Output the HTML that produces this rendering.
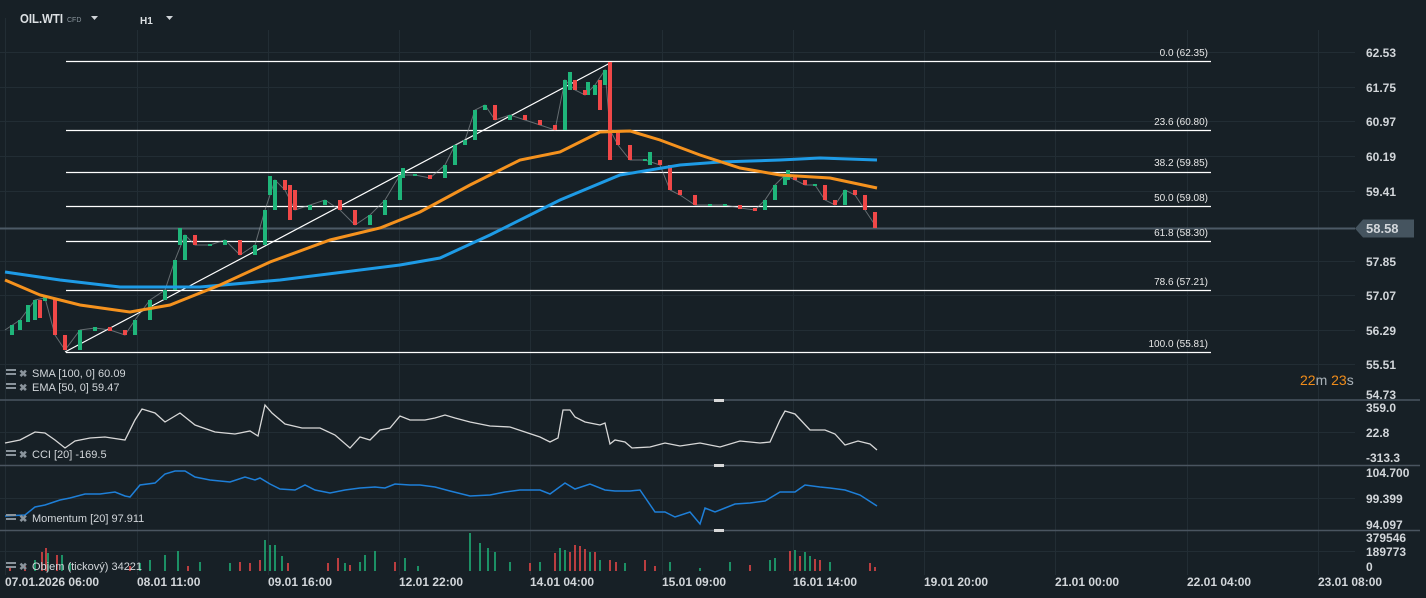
<!DOCTYPE html>
<html><head><meta charset="utf-8"><style>
html,body{margin:0;padding:0;background:#172026;overflow:hidden}
svg{display:block;font-family:"Liberation Sans",sans-serif}
.ax{fill:#d2d6da;font-size:12px;font-weight:bold}
.fib{fill:#e6e6e6;font-size:10px}
.lb{fill:#d2d6da;font-size:11px}
</style></head><body>
<svg width="1426" height="598" viewBox="0 0 1426 598">
<rect width="1426" height="598" fill="#172026"/>
<g stroke="#222d34" stroke-width="1">
<path d="M5.5 18V575M137.5 30V575M268.5 30V575M399.5 30V575M530.5 30V575M662.5 30V575M793.5 30V575M924.5 30V575M1055.5 30V575M1187.5 30V575M1318.5 30V575"/>
<path d="M0 52.5H1355M0 87.5H1355M0 121.5H1355M0 156.5H1355M0 191.5H1355M0 261.5H1355M0 295.5H1355M0 330.5H1355M0 364.5H1355M0 432.5H1355M0 498.5H1355M0 551.5H1355"/>
</g>
<g stroke="#4a5560" stroke-width="1.5"><path d="M0 400H1420M0 465.5H1420M0 530.5H1420"/></g>
<g fill="#d8d8d8"><rect x="714" y="399" width="10" height="3"/><rect x="714" y="464" width="10" height="3"/><rect x="714" y="529" width="10" height="3"/></g>
<text x="20" y="23" fill="#dde1e4" font-size="13" font-weight="bold" textLength="43" lengthAdjust="spacingAndGlyphs">OIL.WTI</text>
<text x="67" y="22" fill="#8a949c" font-size="7">CFD</text>
<path d="M91 16h7l-3.5 4z" fill="#d0d4d8"/>
<text x="140" y="24" fill="#dde1e4" font-size="10" font-weight="bold">H1</text>
<path d="M166 16h7l-3.5 4z" fill="#d0d4d8"/>
<path d="M0 228.5H1355" stroke="#4c5a66" stroke-width="2"/>
<path d="M1355 228.5l8-9h51v18h-51z" fill="#45545f"/>
<text x="1366" y="233" class="ax" style="font-size:13px">58.58</text>
<g stroke="#ffffff" stroke-width="1.2"><path d="M66 61.5H1211M66 130.5H1211M66 172.5H1211M66 206.5H1211M66 241.5H1211M66 290.5H1211M66 352.5H1211"/><path d="M65 352L612 62"/></g>
<g class="fib" text-anchor="end"><text x="1208" y="56">0.0 (62.35)</text><text x="1208" y="125">23.6 (60.80)</text><text x="1208" y="166">38.2 (59.85)</text><text x="1208" y="201">50.0 (59.08)</text><text x="1208" y="236">61.8 (58.30)</text><text x="1208" y="285">78.6 (57.21)</text><text x="1208" y="347">100.0 (55.81)</text></g>
<polyline fill="none" stroke="#9aa0a4" stroke-width="1" opacity="0.6" points="5,330 20,320 35,300 45,298 55,335 65,350 80,330 95,328 110,330 125,335 135,320 150,300 165,290 175,260 185,235 195,245 210,245 225,240 240,255 255,245 265,210 275,180 285,190 295,210 310,205 325,200 340,210 355,225 370,215 385,200 400,175 415,175 430,178 445,165 455,145 465,140 475,110 485,105 495,120 510,115 525,120 540,125 555,130 565,80 575,90 585,95 595,85 605,70 610,130 618,145 630,160 645,160 660,165 670,190 680,195 695,205 710,205 725,205 740,208 755,210 765,200 775,185 785,175 795,180 805,185 815,185 825,200 835,205 845,190 855,195 865,210 875,225"/>
<path stroke="#1fb57a" stroke-width="4" d="M20 330V320M35 320V300M45 301V297M80 350V330M95 331V327M135 335V320M150 320V300M165 300V290M175 290V260M185 260V235M225 245V240M255 255V245M265 245V210M275 210V180M310 210V205M325 205V200M370 225V215M385 215V200M400 200V175M445 178V165M455 165V145M465 145V140M475 140V110M485 110V105M510 120V115M565 130V80M595 95V85M605 85V70M765 210V200M775 200V185M785 185V175M845 205V190M210 246V244M415 176V174M645 161V159M710 206V204M725 206V204M815 186V184M12 335V325M28 322V305M180 245V228M270 195V176M403 178V168M570 90V72M588 95V82M650 165V152M788 180V170"/>
<path stroke="#f04848" stroke-width="4" d="M55 298V335M65 335V350M110 327V331M125 330V335M195 235V245M240 240V255M285 180V190M295 190V210M340 200V210M355 210V225M430 175V179M495 105V120M525 115V120M540 120V125M555 125V130M575 80V90M585 90V95M610 62V160M618 130V145M630 145V160M660 160V165M670 165V190M680 190V195M695 195V205M740 205V209M755 208V211M795 175V180M805 180V185M825 185V200M835 200V205M855 190V195M865 195V210M875 212V228M40 300V318M290 185V220M600 80V110"/>
<polyline fill="none" stroke="#1e9be6" stroke-width="3" points="5,272 60,280 120,287 200,287 280,280 400,265 440,258 490,235 560,200 620,175 680,165 720,162 780,160 820,158 877,160"/>
<polyline fill="none" stroke="#f5921e" stroke-width="3" points="5,280 40,295 80,305 130,312 170,305 220,285 270,262 330,240 380,228 420,212 470,185 520,160 560,152 600,132 630,131 660,140 700,155 740,168 780,175 830,178 877,188"/>
<g class="ax"><text x="1366" y="57">62.53</text><text x="1366" y="92">61.75</text><text x="1366" y="126">60.97</text><text x="1366" y="161">60.19</text><text x="1366" y="196">59.41</text><text x="1366" y="266">57.85</text><text x="1366" y="300">57.07</text><text x="1366" y="335">56.29</text><text x="1366" y="369">55.51</text><text x="1366" y="399">54.73</text>
<text x="1366" y="412">359.0</text><text x="1366" y="437">22.8</text><text x="1366" y="462">-313.3</text>
<text x="1366" y="477">104.700</text><text x="1366" y="503">99.399</text><text x="1366" y="529">94.097</text>
<text x="1366" y="542">379546</text><text x="1366" y="556">189773</text><text x="1366" y="571">0</text></g>
<text x="1300" y="385" font-size="14" fill="#f08c1a">22<tspan fill="#aab2b8">m</tspan> 23<tspan fill="#aab2b8">s</tspan></text>
<g class="ax" font-size="12"><text x="5" y="586">07.01.2026  06:00</text><text x="137" y="586">08.01  11:00</text><text x="268" y="586">09.01  16:00</text><text x="399" y="586">12.01  22:00</text><text x="530" y="586">14.01  04:00</text><text x="662" y="586">15.01  09:00</text><text x="793" y="586">16.01  14:00</text><text x="924" y="586">19.01  20:00</text><text x="1055" y="586">21.01  00:00</text><text x="1187" y="586">22.01  04:00</text><text x="1318" y="586">23.01  08:00</text></g>
<polyline fill="none" stroke="#d8d8d8" stroke-width="1.3" points="5,443 20,440 35,432 45,433 55,440 65,448 75,441 90,438 105,437 125,440 135,420 142,409 155,413 165,422 180,413 195,425 215,432 235,434 250,431 258,436 265,405 272,413 285,424 302,428 320,428 335,435 350,448 360,437 370,440 380,430 390,428 400,416 410,420 425,420 435,418 445,415 455,418 470,422 490,426 510,427 525,432 540,437 550,442 558,438 563,410 570,410 575,417 585,422 595,424 600,425 605,423 610,444 615,440 625,442 632,448 650,447 665,443 680,446 700,443 720,447 740,441 760,443 770,442 780,420 785,411 795,414 810,430 825,430 835,434 845,445 858,441 870,444 877,450"/>
<polyline fill="none" stroke="#1e7fd8" stroke-width="1.5" points="5,516 25,515 35,507 45,505 60,500 70,498 85,494 100,494 115,492 125,496 130,497 140,485 155,483 165,474 175,471 185,471 195,477 210,480 230,482 245,477 255,480 260,478 270,484 280,489 295,490 305,485 315,490 330,493 345,490 360,488 375,487 385,488 395,484 410,485 420,485 435,487 450,491 470,496 490,495 505,492 520,490 540,490 550,494 565,483 575,489 590,484 605,490 615,491 630,491 640,490 655,512 665,512 675,517 690,512 700,524 705,508 715,512 725,508 735,504 750,503 765,501 780,492 795,492 805,485 820,487 830,488 845,490 860,495 877,506"/>
<path stroke="#1fb57a" stroke-width="1.5" d="M35 571V560M48 571V553M62 571V555M70 571V563M140 571V563M150 571V560M165 571V555M178 571V551M200 571V562M230 571V563M265 571V540M270 571V545M275 571V545M282 571V556M345 571V563M360 571V562M365 571V555M375 571V551M405 571V558M418 571V566M470 571V533M480 571V543M488 571V548M495 571V552M510 571V562M540 571V562M560 571V548M565 571V550M590 571V552M600 571V560M625 571V563M670 571V562M700 571V568M730 571V562M770 571V560M775 571V558M795 571V550M805 571V552M810 571V556M830 571V562"/>
<path stroke="#f04848" stroke-width="1.5" d="M10 571V566M25 571V566M42 571V552M46 571V548M57 571V555M130 571V566M188 571V566M240 571V562M250 571V563M260 571V560M288 571V563M328 571V563M338 571V558M350 571V565M395 571V562M530 571V563M555 571V553M570 571V552M575 571V545M580 571V546M585 571V549M595 571V552M610 571V560M616 571V562M645 571V560M655 571V566M750 571V565M790 571V551M800 571V556M815 571V559M820 571V560M870 571V563M875 571V567"/>
<g class="lb"><text x="32" y="377">SMA [100,  0] 60.09</text><text x="32" y="391">EMA [50,  0] 59.47</text><text x="32" y="458">CCI [20]  -169.5</text><text x="32" y="522">Momentum  [20]  97.911</text><text x="32" y="570">Objem  (tickový)  34221</text></g>
<g fill="#8a949c"><rect x="6" y="369" width="10" height="2"/><rect x="6" y="373" width="10" height="2"/><rect x="6" y="383" width="10" height="2"/><rect x="6" y="387" width="10" height="2"/><rect x="6" y="450" width="10" height="2"/><rect x="6" y="454" width="10" height="2"/><rect x="6" y="514" width="10" height="2"/><rect x="6" y="518" width="10" height="2"/><rect x="6" y="562" width="10" height="2"/><rect x="6" y="566" width="10" height="2"/>
<text x="19" y="377" font-size="10" font-weight="bold">✖</text><text x="19" y="391" font-size="10" font-weight="bold">✖</text><text x="19" y="458" font-size="10" font-weight="bold">✖</text><text x="19" y="522" font-size="10" font-weight="bold">✖</text><text x="19" y="570" font-size="10" font-weight="bold">✖</text></g>
</svg>
</body></html>
